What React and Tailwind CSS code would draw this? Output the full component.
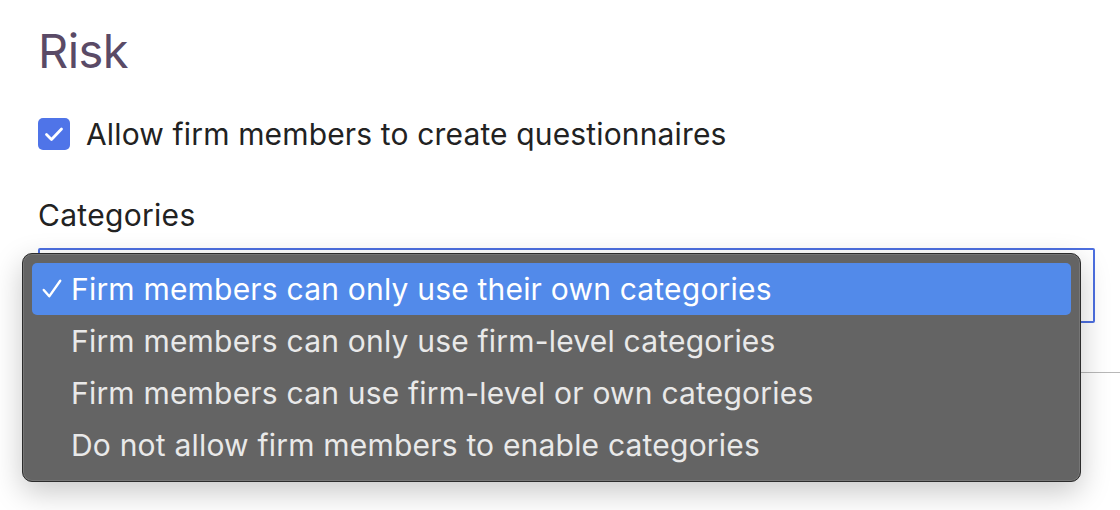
import React from 'react';

const options = [
    'Firm members can only use their own categories',
    'Firm members can only use firm-level categories',
    'Firm members can use firm-level or own categories',
    'Do not allow firm members to enable categories',
];

function CheckIcon({ className, strokeWidth = 2.8, d = 'M4.5 12.5l5 5L19.5 7' }) {
    return (
        <svg viewBox="0 0 24 24" className={className} fill="none" stroke="currentColor" strokeWidth={strokeWidth} strokeLinecap="round" strokeLinejoin="round">
            <path d={d} />
        </svg>
    );
}

export default function App() {
    const selected = 0;

    return (
        <div className="w-[1120px] h-[510px] bg-white overflow-hidden font-['Inter',sans-serif]">
            <div className="pl-[38px] pt-[27px]">
                {/* Heading */}
                <h1 className="text-[47px] leading-none text-[#5a4a66] tracking-[-0.6px]">Risk</h1>

                {/* Checkbox */}
                <label className="mt-[44px] h-[32px] flex items-center gap-[16px]">
                    <span className="w-[32px] h-[32px] rounded-[5px] bg-[#4f74e8] flex items-center justify-center">
                        <CheckIcon className="w-[24px] h-[24px] text-white" />
                    </span>
                    <span className="text-[30px] leading-none text-[#222222] tracking-[0.15px]">Allow firm members to create questionnaires</span>
                </label>

                {/* Categories select */}
                <div className="mt-[50px] text-[30px] text-[#222222] leading-none tracking-[0.3px]">Categories</div>

                <div className="relative mt-[18px] w-[1057px] h-[75px] border-2 border-[#4d6fe0] rounded-[2px] bg-white">
                    {/* Native menu overlay */}
                    <div className="absolute left-[-18px] top-[3px] w-[1059px] h-[229px] rounded-[10px] bg-[#646464] border border-[#2c2c2c] shadow-[0_10px_30px_rgba(0,0,0,0.22),inset_0_0_0_1px_rgba(255,255,255,0.12)] p-[9px] z-10">
                        {options.map((opt, i) => (
                            <div
                                key={opt}
                                className={`h-[52px] flex items-center rounded-[5px] pl-[9px] text-[30px] ${i === selected ? 'bg-[#528aea] text-white' : 'text-[#e9e9e9]'}`}
                            >
                                <span className="w-[30px] flex items-center">
                                    {i === selected && (
                                        <CheckIcon className="w-[22px] h-[22px]" strokeWidth={2.6} d="M3 13l6 7L21 3" />
                                    )}
                                </span>
                                <span className="tracking-[0.2px]">{opt}</span>
                            </div>
                        ))}
                    </div>
                </div>
            </div>

            {/* Divider behind the menu */}
            <div className="mt-[49px] ml-[38px] h-px bg-[#b8b8b8]" />
        </div>
    );
}
